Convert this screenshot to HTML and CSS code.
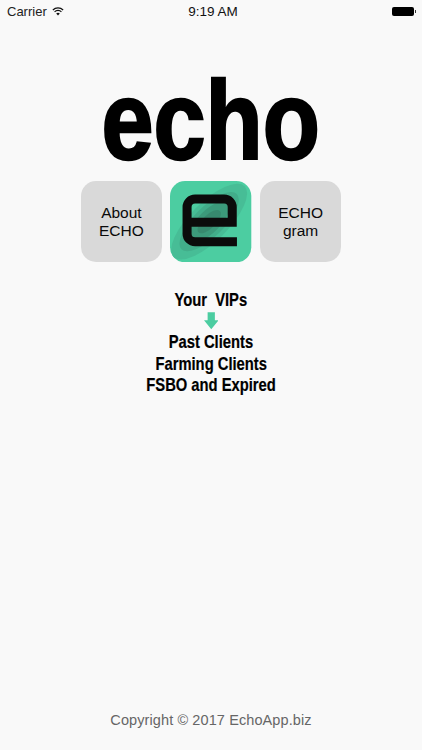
FILE: index.html
```html
<!DOCTYPE html>
<html lang="en">
  <head>
    <meta charset="UTF-8" />
    <meta name="viewport" content="width=device-width, initial-scale=1.0" />
    <title>Echo</title>
    <link rel="stylesheet" href="styles.css">
  </head>
  <body>
    <div class="screen">
      <div class="statusbar">
        <div class="status-left">
          <span>Carrier</span>
          <svg class="wifi" width="12" height="9" viewBox="0 0 14 10">
            <path d="M7 9.8 4.9 7.4a3 3 0 0 1 4.2 0Z" fill="#111" />
            <path d="M3 5.4a5.6 5.6 0 0 1 8 0" fill="none" stroke="#111" stroke-width="1.4" />
            <path d="M1 3.2a8.6 8.6 0 0 1 12 0" fill="none" stroke="#111" stroke-width="1.4" />
          </svg>
        </div>
        <div class="status-time">9:19 AM</div>
        <div class="status-right">
          <div class="battery"></div>
          <div class="battery-tip"></div>
        </div>
      </div>

      <h1 class="title">echo</h1>

      <div class="tiles">
        <div class="tile">About<br />ECHO</div>
        <svg class="logo" width="81.3" height="81.3" viewBox="0 0 81 81">
          <defs>
            <clipPath id="logo-clip">
              <rect width="81" height="81" rx="15" />
            </clipPath>
          </defs>
          <rect width="81" height="81" rx="15" fill="#4ccda1" />
          <g clip-path="url(#logo-clip)">
            <g transform="rotate(-45 39 40.5)">
              <ellipse cx="39" cy="40.5" rx="50" ry="19" fill="#47bd96" />
              <ellipse cx="39" cy="40.5" rx="39" ry="15" fill="#42ad8a" />
              <ellipse cx="39" cy="40.5" rx="27" ry="11" fill="#3c9a7b" />
              <ellipse cx="39" cy="40.5" rx="15" ry="6.5" fill="#37896e" />
            </g>
          </g>
          <path d="M66.7 60.5H25a8 8 0 0 1-8-8V26a8 8 0 0 1 8-8h29a8 8 0 0 1 8 8v15H17" fill="none" stroke="#0b0b0b" stroke-width="9" />
        </svg>
        <div class="tile">ECHO<br />gram</div>
      </div>

      <div class="vips">
        <div class="vips-line vips-head">Your&nbsp; VIPs</div>
        <svg class="arrow" width="14.5" height="17.5" viewBox="0 0 16 19">
          <path d="M4 0h8v9h4l-8 10-8-10h4Z" fill="#4ccda1" />
        </svg>
        <div class="vips-line">Past Clients</div>
        <div class="vips-line">Farming Clients</div>
        <div class="vips-line">FSBO and Expired</div>
      </div>

      <div class="copyright">Copyright © 2017 EchoApp.biz</div>
    </div>
  </body>
</html>
```

FILE: styles.css
```css
html,
body {
  margin: 0;
  padding: 0;
}
body {
  background: #f9f9f9;
  font-family: "Liberation Sans", Arial, sans-serif;
  color: #000;
}
.screen {
  width: 422px;
  height: 750px;
  display: flex;
  flex-direction: column;
  align-items: center;
  overflow: hidden;
}
.statusbar {
  width: 100%;
  height: 22px;
  box-sizing: border-box;
  padding: 0 6px 0 7px;
  display: flex;
  align-items: center;
  justify-content: space-between;
  font-size: 13px;
  color: #222;
}
.status-left {
  width: 120px;
  display: flex;
  align-items: center;
  gap: 5px;
}
.status-time {
  font-size: 13.5px;
  margin-left: 3px;
  color: #111;
}
.status-right {
  width: 120px;
  display: flex;
  align-items: center;
  justify-content: flex-end;
}
.battery {
  width: 22px;
  height: 9px;
  background: #000;
  border-radius: 2px;
}
.battery-tip {
  width: 1px;
  height: 3px;
  margin-left: 1px;
  background: #333;
}
.title {
  margin: 36px 0 0;
  height: 123px;
  font-size: 112px;
  line-height: 125px;
  font-weight: bold;
  -webkit-text-stroke: 2.5px #000;
  transform: scaleX(0.835);
}
.tiles {
  display: flex;
  gap: 8.3px;
}
.tile {
  width: 81.3px;
  height: 81.3px;
  border-radius: 15px;
  background: #d9d9d9;
  display: flex;
  align-items: center;
  justify-content: center;
  text-align: center;
  font-size: 15.5px;
  line-height: 18px;
  color: #0a0a0a;
}
.vips {
  margin-top: 28px;
  display: flex;
  flex-direction: column;
  align-items: center;
}
.vips-line {
  height: 21.5px;
  font-size: 17.8px;
  line-height: 21.5px;
  font-weight: bold;
  white-space: nowrap;
  -webkit-text-stroke: 0.2px #000;
  transform: scaleX(0.83);
}
.arrow {
  display: block;
  margin: 0.5px 0 2.5px;
}
.copyright {
  margin-top: auto;
  margin-bottom: 21px;
  font-size: 14.5px;
  line-height: 18px;
  letter-spacing: 0.1px;
  color: #666;
}
```
